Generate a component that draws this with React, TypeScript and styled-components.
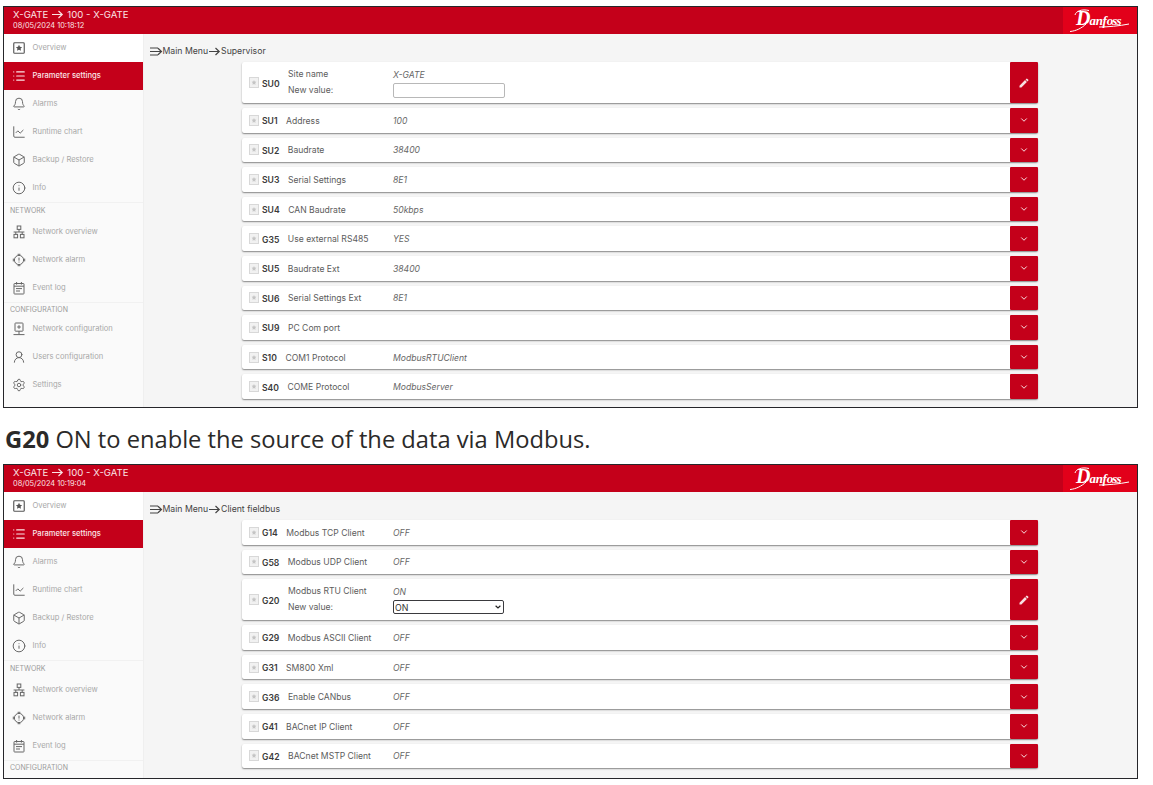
import React from "react";
import styled, { createGlobalStyle } from "styled-components";
import { Bell, ChartLine, Box, Info, Settings, UserRound, ChevronDown, List } from "lucide-react";
import { MdEdit } from "react-icons/md";

const Global = createGlobalStyle`
  html, body { margin: 0; padding: 0; background: #fff; }
  body { font-family: Inter, "Liberation Sans", sans-serif; }
  * { box-sizing: border-box; }
`;

const Page = styled.div`
  width: 1153px;
  height: 785px;
  padding: 6px 15px 0 3px;
  overflow: hidden;
`;

const Frame = styled.section<{ $height: number }>`
  height: ${(p) => p.$height}px;
  border: 1.5px solid #26262a;
  background: #f5f5f5;
  display: flex;
  flex-direction: column;
  overflow: hidden;
`;

const Header = styled.header`
  flex: 0 0 27px;
  background: #c4001a;
  display: flex;
  justify-content: space-between;
  color: #fbe3e5;
`;

const HeaderText = styled.div`
  padding: 1px 0 0 9px;
`;

const HeaderTitle = styled.div`
  display: flex;
  align-items: center;
  gap: 3px;
  font-size: 9.6px;
  line-height: 13px;
  white-space: nowrap;
`;

const HeaderDate = styled.div`
  font-size: 7.4px;
  line-height: 9px;
`;

const LogoBox = styled.div`
  width: 74px;
  background: #e2001a;
  display: flex;
  align-items: center;
  justify-content: center;
`;

const Body = styled.div`
  flex: 1;
  display: flex;
  min-height: 0;
`;

const Sidebar = styled.nav`
  flex: 0 0 139.5px;
  background: #fafafa;
  border-right: 1px solid #efefef;
  overflow: hidden;
`;

const NavItem = styled.div<{ $active?: boolean }>`
  height: 28px;
  display: flex;
  align-items: center;
  padding: 0 0 1px 7.5px;
  gap: 7px;
  font-size: 7.6px;
  color: ${(p) => (p.$active ? "#fbe6e8" : "#a8a8a8")};
  background: ${(p) => (p.$active ? "#c4001a" : "transparent")};
  font-weight: ${(p) => (p.$active ? 500 : 400)};
  white-space: nowrap;
  &:first-child { background: #fff; }
  svg { flex: 0 0 14px; width: 14px; height: 14px; color: ${(p) => (p.$active ? "#fbe6e8" : "#666")}; }
`;

const NavSection = styled.div<{ $height: number }>`
  height: ${(p) => p.$height}px;
  display: flex;
  align-items: center;
  padding-left: 6px;
  font-size: 7px;
  color: #9a9a9a;
  border-top: 1px solid #f1f1f1;
`;

const Main = styled.main`
  flex: 1;
  min-width: 0;
  overflow: hidden;
`;

const Crumb = styled.div`
  height: 28px;
  padding: 6px 0 0 6px;
  display: flex;
  align-items: center;
  font-size: 8.7px;
  color: #444;
  white-space: nowrap;
  svg { flex: none; }
`;

const Rows = styled.div`
  margin-left: 98.5px;
  width: 796px;
  display: flex;
  flex-direction: column;
  gap: 5px;
`;

const Row = styled.div<{ $tall?: boolean }>`
  flex: none;
  height: ${(p) => (p.$tall ? 41 : 24.6)}px;
  background: #fff;
  border-radius: 2px;
  box-shadow: 0 1px 1.5px rgba(0, 0, 0, 0.45);
  display: flex;
  align-items: center;
  padding-left: 7px;
  font-size: 8.6px;
  color: #5c5c5c;
`;

const Head = styled.div`
  flex: 0 0 144px;
  display: flex;
  align-items: center;
  white-space: nowrap;
`;

const Fav = styled.svg`
  flex: none;
  width: 10px;
  height: 11px;
  margin-right: 3px;
`;

const Code = styled.span`
  font-weight: 600;
  color: #3a3a3a;
  margin-right: 8.5px;
  padding-top: 2px;
`;

const Stack = styled.div<{ $tall?: boolean }>`
  display: flex;
  flex-direction: column;
  gap: 5px;
  line-height: 11px;
  padding-top: ${(p) => (p.$tall ? 0 : 2)}px;
`;

const Value = styled.span`
  font-style: italic;
  color: #666;
  line-height: 11px;
`;

const ValueCell = styled.div`
  flex: 1;
  display: flex;
  flex-direction: column;
  gap: 2px;
  padding-top: 2px;
  align-items: flex-start;
`;

const TextInput = styled.input`
  width: 112px;
  height: 15px;
  border: 1px solid #b8b8b8;
  border-radius: 2px;
  background: #fff;
  padding: 0;
`;

const Select = styled.select`
  width: 111px;
  height: 14px;
  border: 1.5px solid #3a3a3e;
  border-radius: 2px;
  padding: 0 0 0 1px;
  font: 8.8px Inter, sans-serif;
  color: #333;
  appearance: none;
  background: #fff url("data:image/svg+xml,%3Csvg xmlns='http://www.w3.org/2000/svg' width='6' height='4'%3E%3Cpath d='M.6.8 3 3l2.4-2.2' fill='none' stroke='%23222' stroke-width='1.2'/%3E%3C/svg%3E") no-repeat right 2px center;
`;

const RowButton = styled.button`
  flex: 0 0 28px;
  align-self: stretch;
  border: 0;
  padding: 0;
  border-radius: 1px;
  background: #c4001a;
  color: #f7dfe1;
  display: flex;
  align-items: center;
  justify-content: center;
`;

const Caption = styled.p`
  margin: 0;
  height: 56px;
  padding: 5px 0 0 2px;
  display: flex;
  align-items: center;
  font: 23.7px "Open Sans", sans-serif;
  color: #2b2a29;
  white-space: nowrap;
  b { font-weight: 700; }
`;

const BreadArrow = () => (
  <svg width="13" height="9" viewBox="0 0 13 9" fill="none" stroke="currentColor" strokeWidth="1.2">
    <path d="M1 4.5h10M7.5 1l3.7 3.5L7.5 8" />
  </svg>
);

const CrumbIcon = () => (
  <svg width="13" height="9" viewBox="0 0 13 9" fill="none" stroke="currentColor" strokeWidth="1.2">
    <path d="M0 1h8M0 4.5h11M0 8h8M8 1.2l3.5 3.3L8 7.8" />
  </svg>
);

const StarBox = () => (
  <svg viewBox="-1 -1 16 16">
    <rect x="1" y="1" width="12" height="12" rx="1" fill="none" stroke="#555" strokeWidth="1.3" />
    <path d="M7 3.4l1.1 2.3 2.5.3-1.8 1.7.5 2.5L7 9.1l-2.3 1.1.5-2.5L3.4 6l2.5-.3z" fill="#555" />
  </svg>
);

const NetTree = () => (
  <svg viewBox="0 0 14 14" fill="none" stroke="currentColor" strokeWidth="1">
    <rect x="5.2" y="1" width="3.6" height="3.4" />
    <rect x="2" y="9.4" width="3.6" height="3.4" />
    <rect x="8.4" y="9.4" width="3.6" height="3.4" />
    <path d="M7 4.4V7M1.6 7h10.8M3.8 7v2.4M10.2 7v2.4" />
  </svg>
);

const NetAlarm = () => (
  <svg viewBox="0 0 14 14" fill="none" stroke="currentColor" strokeWidth="1">
    <circle cx="7" cy="7" r="4.6" />
    <path d="M7 4.6v3M7 8.6v.9" />
    <path d="M5.6 1.3h2.8M5.6 12.7h2.8M1.3 5.6v2.8M12.7 5.6v2.8" />
  </svg>
);

const NetConfig = () => (
  <svg viewBox="0 0 14 14" fill="none" stroke="currentColor" strokeWidth="1">
    <rect x="3" y="1" width="8" height="8.2" rx=".6" />
    <path d="M7 3.2v3.6M5.2 5h3.6M7 9.2v3M1.5 12.6h11" />
  </svg>
);

const EventLog = () => (
  <svg viewBox="0 0 14 14" fill="none" stroke="currentColor" strokeWidth="1">
    <rect x="2" y="2.5" width="10" height="10.5" rx=".6" />
    <path d="M2 5.2h10M4.6 1v2.6M9.4 1v2.6M4 7.6h6M4 10h4" />
  </svg>
);

const Fave = () => (
  <Fav viewBox="0 0 10 11">
    <rect x="0.5" y="0.5" width="9" height="10" fill="#f1f1f1" stroke="#d8d8d8" />
    <path d="M5 3l.7 1.6 1.7.2-1.2 1.2.3 1.7L5 7l-1.5.8.3-1.7L2.6 4.8l1.7-.2z" fill="#c4c4c4" />
  </Fav>
);

const Logo = () => (
  <svg width="62" height="25" viewBox="0 0 62 25">
    <text x="7" y="17" fontFamily="'Liberation Serif', serif" fontStyle="italic" fontWeight="700" fill="#fff">
      <tspan fontSize="20">D</tspan>
      <tspan fontSize="13" dx="-1" letterSpacing="-0.3">anf</tspan>
      <tspan fontSize="13" letterSpacing="-0.8">oss</tspan>
    </text>
    <path d="M1 23.5C7 23 13 20 17 16M20 2.5C13 .8 7 3 6 7M30 19c9 0 20-1 30-3" fill="none" stroke="#fff" strokeWidth="1" />
  </svg>
);

type NavDef = { label: string; icon: React.ReactNode; active?: boolean } | { section: string; height: number };

const nav: NavDef[] = [
  { label: "Overview", icon: <StarBox /> },
  { label: "Parameter settings", icon: <List strokeWidth={2} />, active: true },
  { label: "Alarms", icon: <Bell strokeWidth={1.7} /> },
  { label: "Runtime chart", icon: <ChartLine strokeWidth={1.7} /> },
  { label: "Backup / Restore", icon: <Box strokeWidth={1.7} /> },
  { label: "Info", icon: <Info strokeWidth={1.7} /> },
  { section: "NETWORK", height: 16 },
  { label: "Network overview", icon: <NetTree /> },
  { label: "Network alarm", icon: <NetAlarm /> },
  { label: "Event log", icon: <EventLog /> },
  { section: "CONFIGURATION", height: 13 },
  { label: "Network configuration", icon: <NetConfig /> },
  { label: "Users configuration", icon: <UserRound strokeWidth={1.7} /> },
  { label: "Settings", icon: <Settings strokeWidth={1.6} /> },
];

type RowDef = { code: string; label: string; value: string; control?: React.ReactNode };

const Screen = ({ height, date, crumb, rows, navCount }: { height: number; date: string; crumb: string; rows: RowDef[]; navCount: number }) => (
  <Frame $height={height}>
    <Header>
      <HeaderText>
        <HeaderTitle>
          X-GATE <BreadArrow /> 100 - X-GATE
        </HeaderTitle>
        <HeaderDate>{date}</HeaderDate>
      </HeaderText>
      <LogoBox>
        <Logo />
      </LogoBox>
    </Header>
    <Body>
      <Sidebar>
        {nav.slice(0, navCount).map((n) =>
          "section" in n ? (
            <NavSection key={n.section} $height={n.height}>{n.section}</NavSection>
          ) : (
            <NavItem key={n.label} $active={n.active}>
              {n.icon}
              {n.label}
            </NavItem>
          )
        )}
      </Sidebar>
      <Main>
        <Crumb>
          <CrumbIcon />
          Main Menu <BreadArrow /> {crumb}
        </Crumb>
        <Rows>
          {rows.map((r) => (
            <Row key={r.code} $tall={!!r.control}>
              <Head>
                <Fave />
                <Code>{r.code}</Code>
                <Stack $tall={!!r.control}>
                  <span>{r.label}</span>
                  {r.control && <span>New value:</span>}
                </Stack>
              </Head>
              <ValueCell>
                <Value>{r.value}</Value>
                {r.control}
              </ValueCell>
              <RowButton>{r.control ? <MdEdit size={12} /> : <ChevronDown size={10} strokeWidth={2.4} />}</RowButton>
            </Row>
          ))}
        </Rows>
      </Main>
    </Body>
  </Frame>
);

const first: RowDef[] = [
  { code: "SU0", label: "Site name", value: "X-GATE", control: <TextInput /> },
  { code: "SU1", label: "Address", value: "100" },
  { code: "SU2", label: "Baudrate", value: "38400" },
  { code: "SU3", label: "Serial Settings", value: "8E1" },
  { code: "SU4", label: "CAN Baudrate", value: "50kbps" },
  { code: "G35", label: "Use external RS485", value: "YES" },
  { code: "SU5", label: "Baudrate Ext", value: "38400" },
  { code: "SU6", label: "Serial Settings Ext", value: "8E1" },
  { code: "SU9", label: "PC Com port", value: "" },
  { code: "S10", label: "COM1 Protocol", value: "ModbusRTUClient" },
  { code: "S40", label: "COME Protocol", value: "ModbusServer" },
];

const second: RowDef[] = [
  { code: "G14", label: "Modbus TCP Client", value: "OFF" },
  { code: "G58", label: "Modbus UDP Client", value: "OFF" },
  {
    code: "G20",
    label: "Modbus RTU Client",
    value: "ON",
    control: (
      <Select defaultValue="ON">
        <option>ON</option>
        <option>OFF</option>
      </Select>
    ),
  },
  { code: "G29", label: "Modbus ASCII Client", value: "OFF" },
  { code: "G31", label: "SM800 Xml", value: "OFF" },
  { code: "G36", label: "Enable CANbus", value: "OFF" },
  { code: "G41", label: "BACnet IP Client", value: "OFF" },
  { code: "G42", label: "BACnet MSTP Client", value: "OFF" },
];

export default function App() {
  return (
    <Page>
      <Global />
      <Screen height={402} date="08/05/2024 10:18:12" crumb="Supervisor" rows={first} navCount={14} />
      <Caption>
        <span>
          <b>G20</b> ON to enable the source of the data via Modbus.
        </span>
      </Caption>
      <Screen height={315} date="08/05/2024 10:19:04" crumb="Client fieldbus" rows={second} navCount={11} />
    </Page>
  );
}
